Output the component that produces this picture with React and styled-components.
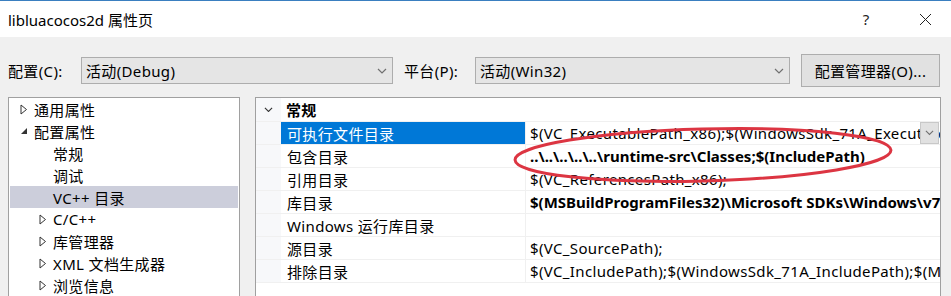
import React from "react";
import styled, { createGlobalStyle } from "styled-components";

const Global = createGlobalStyle`
  html, body { margin: 0; padding: 0; background: #f0f0f0; }
  body { font-family: "Noto Sans", "Noto Sans CJK SC", sans-serif; color: #000; }
`;

const FONT = `"Noto Sans", "Noto Sans CJK SC", sans-serif`;

const Window = styled.div`
  position: relative;
  width: 951px;
  height: 296px;
  overflow: hidden;
  background: #f0f0f0;
  font-family: ${FONT};
  font-size: 15px;
  letter-spacing: 0.35px;
`;

const TitleBar = styled.div`
  height: 37px;
  box-sizing: border-box;
  border-top: 1px solid #3a7fc0;
  background: #fff;
  display: flex;
  align-items: center;
  padding-left: 8px;
  font-size: 15px;
  letter-spacing: 0;
`;

const TitleText = styled.div`
  flex: 1;
`;

const TitleBtn = styled.div`
  width: ${(p) => p.$w}px;
  margin-right: ${(p) => p.$mr || 0}px;
  font-size: 15px;
  color: #222;
  display: flex;
  justify-content: center;
  align-items: center;
`;

const Toolbar = styled.div`
  display: flex;
  align-items: center;
  height: 33px;
  margin-top: 17px;
  padding-left: 8px;
`;

const Label = styled.div`
  width: ${(p) => p.$w}px;
  white-space: nowrap;
`;

const Combo = styled.div`
  box-sizing: border-box;
  width: ${(p) => p.$w}px;
  height: 27px;
  border: 1px solid #adadad;
  background: #e5e5e5;
  display: flex;
  align-items: center;
  padding-left: 4px;
  margin-right: ${(p) => p.$mr || 0}px;
`;

const ComboText = styled.div`
  flex: 1;
`;

const ComboArrow = styled.div`
  width: 20px;
  display: flex;
  justify-content: center;
  align-items: center;
`;

const Button = styled.div`
  box-sizing: border-box;
  width: 139px;
  height: 33px;
  border: 1px solid #adadad;
  background: #e1e1e1;
  display: flex;
  align-items: center;
  justify-content: center;
`;

const Panels = styled.div`
  display: flex;
  gap: 15px;
  margin-top: 10px;
  padding-left: 8px;
`;

const Tree = styled.div`
  box-sizing: border-box;
  width: 232px;
  height: 220px;
  border: 1px solid #a0a0a0;
  border-bottom: none;
  background: #fff;
  padding: 0 1px 0 1px;
`;

const TreeRow = styled.div`
  height: 22px;
  display: flex;
  align-items: center;
  padding-left: ${(p) => p.$indent}px;
  background: ${(p) => (p.$sel ? "#cccedb" : "transparent")};
  white-space: nowrap;
`;

const Expander = styled.div`
  width: 14px;
  display: flex;
  align-items: center;
  justify-content: flex-start;
`;

const Grid = styled.div`
  box-sizing: border-box;
  width: 686px;
  height: 220px;
  border: 1px solid #a0a0a0;
  border-bottom: none;
  background: #fff;
  overflow: hidden;
`;

const GridRow = styled.div`
  display: flex;
  height: ${(p) => (p.$cat ? 24 : 23)}px;
  box-sizing: border-box;
  border-bottom: 1px solid #f0f0f0;
`;

const Margin = styled.div`
  width: 25px;
  flex: none;
  background: #f7f8fa;
  display: flex;
  align-items: center;
  justify-content: center;
`;

const CatText = styled.div`
  flex: 1;
  display: flex;
  align-items: center;
  padding-left: 5px;
  font-weight: bold;
`;

const NameCell = styled.div`
  width: 245px;
  flex: none;
  box-sizing: border-box;
  padding-left: 6px;
  display: flex;
  align-items: center;
  background: ${(p) => (p.$sel ? "#0078d7" : "transparent")};
  color: ${(p) => (p.$sel ? "#fff" : "#000")};
  border-right: 1px solid #f0f0f0;
  white-space: nowrap;
`;

const ValueCell = styled.div`
  flex: 1;
  min-width: 0;
  display: flex;
  align-items: center;
  padding-left: 4px;
  position: relative;
  overflow: hidden;
  white-space: nowrap;
  font-weight: ${(p) => (p.$bold ? "bold" : "normal")};
  letter-spacing: ${(p) => (p.$bold ? "0" : "0.35px")};
`;

const ValueDrop = styled.div`
  position: absolute;
  right: 1px;
  top: 0;
  bottom: 0;
  width: 19px;
  background: #e1e1e1;
  border: 1px solid #c8c8c8;
  box-sizing: border-box;
  display: flex;
  align-items: center;
  justify-content: center;
`;

const Overlay = styled.svg`
  position: absolute;
  left: 0;
  top: 0;
  pointer-events: none;
`;

const Chevron = ({ color = "#707070", size = 10 }) => (
  <svg width={size} height={size * 0.6} viewBox="0 0 10 6">
    <path d="M1 1 L5 5 L9 1" fill="none" stroke={color} strokeWidth="1.2" />
  </svg>
);

const Collapsed = () => (
  <svg width="8" height="11" viewBox="0 0 8 11">
    <path d="M1 1 L6.5 5.5 L1 10 Z" fill="none" stroke="#333" strokeWidth="1" />
  </svg>
);

const Expanded = () => (
  <svg width="8" height="8" viewBox="0 0 8 8">
    <path d="M7 1 L7 7 L1 7 Z" fill="#333" />
  </svg>
);

const CloseIcon = () => (
  <svg width="13" height="13" viewBox="0 0 13 13">
    <path d="M1 1 L12 12 M12 1 L1 12" stroke="#222" strokeWidth="1" />
  </svg>
);

const tree = [
  { text: "通用属性", indent: 10, exp: "c" },
  { text: "配置属性", indent: 10, exp: "e" },
  { text: "常规", indent: 43 },
  { text: "调试", indent: 43 },
  { text: "VC++ 目录", indent: 43, sel: true },
  { text: "C/C++", indent: 29, exp: "c" },
  { text: "库管理器", indent: 29, exp: "c" },
  { text: "XML 文档生成器", indent: 29, exp: "c" },
  { text: "浏览信息", indent: 29, exp: "c" },
];

const rows = [
  {
    name: "可执行文件目录",
    value: "$(VC_ExecutablePath_x86);$(WindowsSdk_71A_ExecutablePath_x86);$(WindowsSdk_71A_ExecutablePath_x64)",
    sel: true,
    drop: true,
  },
  { name: "包含目录", value: "..\\..\\..\\..\\..\\runtime-src\\Classes;$(IncludePath)", bold: true },
  { name: "引用目录", value: "$(VC_ReferencesPath_x86);" },
  {
    name: "库目录",
    value: "$(MSBuildProgramFiles32)\\Microsoft SDKs\\Windows\\v7.1A\\lib;$(LibraryPath)",
    bold: true,
  },
  { name: "Windows 运行库目录", value: "" },
  { name: "源目录", value: "$(VC_SourcePath);" },
  {
    name: "排除目录",
    value: "$(VC_IncludePath);$(WindowsSdk_71A_IncludePath);$(MSBuildToolsPath32);$(VC_LibraryPath_x86);",
  },
];

export default function App() {
  return (
    <>
      <Global />
      <Window>
        <TitleBar>
          <TitleText>libluacocos2d 属性页</TitleText>
          <TitleBtn $w={40} $mr={16}>?</TitleBtn>
          <TitleBtn $w={46} $mr={3}>
            <CloseIcon />
          </TitleBtn>
        </TitleBar>
        <Toolbar>
          <Label $w={73}>配置(C):</Label>
          <Combo $w={312} $mr={11}>
            <ComboText>活动(Debug)</ComboText>
            <ComboArrow>
              <Chevron />
            </ComboArrow>
          </Combo>
          <Label $w={71}>平台(P):</Label>
          <Combo $w={315} $mr={11}>
            <ComboText>活动(Win32)</ComboText>
            <ComboArrow>
              <Chevron />
            </ComboArrow>
          </Combo>
          <Button>配置管理器(O)...</Button>
        </Toolbar>
        <Panels>
          <Tree>
            {tree.map((t) => (
              <TreeRow key={t.text} $indent={t.indent} $sel={t.sel}>
                {t.exp && (
                  <Expander>{t.exp === "c" ? <Collapsed /> : <Expanded />}</Expander>
                )}
                {t.text}
              </TreeRow>
            ))}
          </Tree>
          <Grid>
            <GridRow $cat>
              <Margin>
                <Chevron color="#333" size={9} />
              </Margin>
              <CatText>常规</CatText>
            </GridRow>
            {rows.map((r) => (
              <GridRow key={r.name}>
                <Margin />
                <NameCell $sel={r.sel}>{r.name}</NameCell>
                <ValueCell $bold={r.bold}>
                  {r.value}
                  {r.drop && (
                    <ValueDrop>
                      <Chevron size={9} />
                    </ValueDrop>
                  )}
                </ValueCell>
              </GridRow>
            ))}
          </Grid>
        </Panels>
        <Overlay width="951" height="296" viewBox="0 0 951 296">
          <ellipse
            cx="703"
            cy="155"
            rx="188"
            ry="26"
            fill="none"
            stroke="#dc3542"
            strokeWidth="3"
            transform="rotate(-1.5 703 155)"
          />
        </Overlay>
      </Window>
    </>
  );
}
